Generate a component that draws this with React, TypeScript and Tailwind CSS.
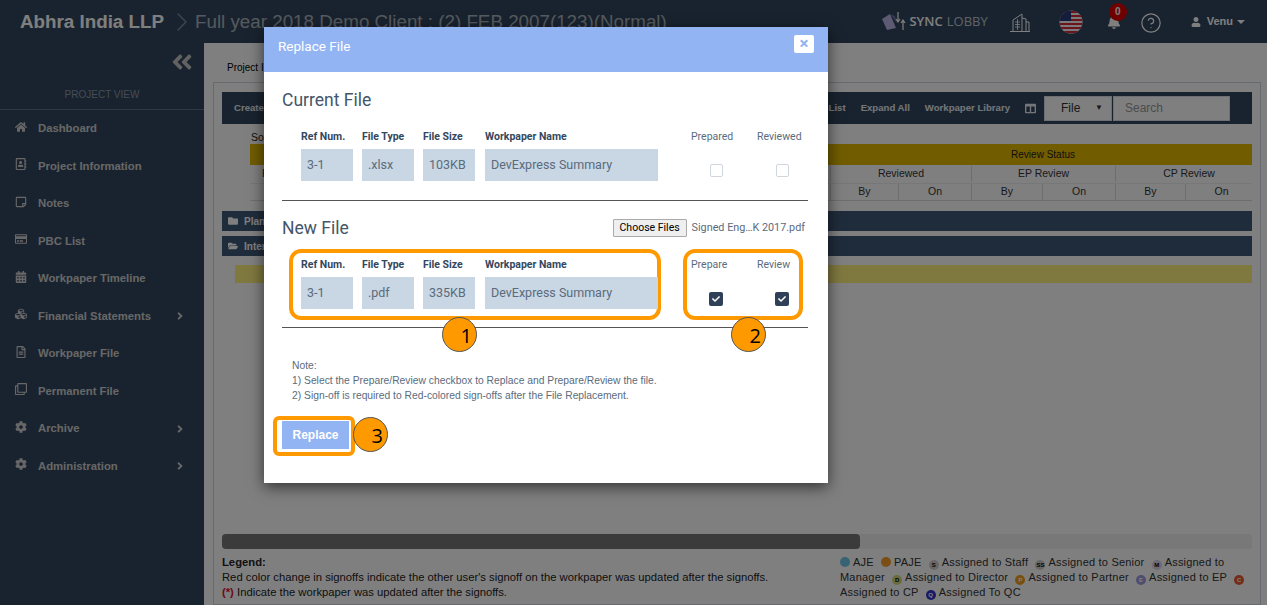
import { ReactNode } from "react";
import {
  FaAngleDoubleLeft, FaAngleRight, FaBell, FaCalendarAlt, FaCheck, FaCog, FaColumns, FaCubes, FaFolder,
  FaFolderOpen, FaHome, FaRegAddressBook, FaRegClone, FaRegCreditCard, FaRegFileAlt, FaRegStickyNote, FaUser,
} from "react-icons/fa";
import { ChevronRight, CircleHelp } from "lucide-react";

const navItems = [
  { label: "Dashboard", icon: <FaHome /> },
  { label: "Project Information", icon: <FaRegAddressBook /> },
  { label: "Notes", icon: <FaRegStickyNote /> },
  { label: "PBC List", icon: <FaRegCreditCard /> },
  { label: "Workpaper Timeline", icon: <FaCalendarAlt /> },
  { label: "Financial Statements", icon: <FaCubes />, more: true },
  { label: "Workpaper File", icon: <FaRegFileAlt /> },
  { label: "Permanent File", icon: <FaRegClone /> },
  { label: "Archive", icon: <FaCog />, more: true },
  { label: "Administration", icon: <FaCog />, more: true },
];

const legendItems = [
  { c: "bg-[#6ec6ea]", t: "", label: ["AJE"] },
  { c: "bg-[#f59d2a]", t: "", label: ["PAJE"] },
  { c: "bg-[#ccc] text-black", t: "S", label: ["Assigned to Staff"] },
  { c: "bg-[#ccc] text-black", t: "SS", label: ["Assigned to Senior"] },
  { c: "bg-[#d7d5ea] text-black", t: "M", label: ["Assigned to", "Manager"] },
  { c: "bg-[#d5d87a] text-black", t: "D", label: ["Assigned to Director"] },
  { c: "bg-[#f29f1d] text-white", t: "P", label: ["Assigned to Partner"] },
  { c: "bg-[#9e9ae0] text-white", t: "E", label: ["Assigned to EP"] },
  { c: "bg-[#ea5a34] text-white", t: "C", label: ["Assigned to CP"] },
  { c: "bg-[#3433c9] text-white", t: "Q", label: ["Assigned To QC"] },
];

function Flag() {
  return (
    <svg width="24" height="24" viewBox="0 0 24 24">
      <clipPath id="flag"><circle cx="12" cy="12" r="11.5" /></clipPath>
      <g clipPath="url(#flag)">
        <rect width="24" height="24" fill="#f4f4f4" />
        {[1, 5, 9, 13, 17, 21].map((y) => <rect key={y} y={y} width="24" height="2" fill="#d8283c" />)}
        <rect width="12" height="11" fill="#2a3a78" />
      </g>
    </svg>
  );
}

function Logo() {
  return (
    <svg width="24" height="22" viewBox="0 0 24 22">
      <path d="M0 8 L8 3 L14 17 L5 19 Z" fill="#b9b6e6" />
      <path d="M8 3 L13 5 L15 12 Z" fill="#6d6aa8" />
      <path d="M16 1 V10 M14 8 L16 11 L18 8" stroke="#fff" strokeWidth="1.2" fill="none" />
      <path d="M21 19 V10 M19 12 L21 9 L23 12" stroke="#fff" strokeWidth="1.2" fill="none" />
    </svg>
  );
}

function Building() {
  return (
    <svg width="22" height="22" viewBox="0 0 22 22" fill="none" stroke="#fff" strokeWidth="1">
      <path d="M4 20 V9 L13 3 V20 M13 7 L17 8 V20 M17 11 H20 V20 M1 20.5 H21" />
      <path d="M6 11 H11 M6 13.5 H11 M6 16 H11 M8.500 8 V19" strokeWidth="0.8" />
    </svg>
  );
}

function Header() {
  return (
    <div className="flex h-[43px] shrink-0 items-center bg-[#33475e] pl-5 pr-[22px] font-['Liberation_Sans',sans-serif]">
      <span className="mt-px text-[18.8px] font-bold text-white">Abhra India LLP</span>
      <ChevronRight size={32} strokeWidth={0.9} className="ml-[2px] mt-px text-white/40" />
      <span className="-ml-[3px] mt-px text-[18.8px] text-white/60">Full year 2018 Demo Client : (2) FEB 2007(123)(Normal)</span>
      <div className="ml-auto flex items-center">
        <Logo />
        <span className="ml-[3px] font-['Open_Sans',sans-serif] text-[13px] font-semibold text-white">SYNC</span>
        <span className="ml-1 font-['Open_Sans',sans-serif] text-[13px] text-white/70">LOBBY</span>
        <div className="ml-[21px]"><Building /></div>
        <div className="ml-[28px]"><Flag /></div>
        <div className="relative ml-[24px] text-[14px] text-white">
          <FaBell />
          <span className="absolute -top-[12px] -right-[6px] flex h-[18px] w-[18px] items-center justify-center rounded-full bg-[#e00000] text-[10px] font-bold">0</span>
        </div>
        <CircleHelp size={22} strokeWidth={1.3} className="ml-[19px] mt-[2px] text-white" />
        <FaUser className="ml-[29px] text-[10px] text-white" />
        <span className="ml-[6px] text-[11px] font-bold text-white">Venu</span>
        <span className="ml-[4px] h-0 w-0 border-x-[4px] border-t-[4px] border-x-transparent border-t-white" />
      </div>
    </div>
  );
}

function Sidebar() {
  return (
    <aside className="flex w-[204px] shrink-0 flex-col bg-[#33475e] font-['Liberation_Sans',sans-serif]">
      <div className="flex h-[38px] items-center justify-end pr-[10px] text-[24px] text-[#c4c4c4]"><FaAngleDoubleLeft /></div>
      <div className="h-[29px] border-b border-[#5c7088] text-center text-[10px] leading-[28px] text-[#8a98a8]">PROJECT VIEW</div>
      <nav className="flex flex-col">
        {navItems.map((item) => (
          <div key={item.label} className="flex h-[37.5px] items-center pl-[15px] pr-[18px] text-[#cfcfcf]">
            <span className="-mt-[4px] flex w-[23px] text-[12px]">{item.icon}</span>
            <span className="text-[11.3px] font-bold">{item.label}</span>
            {item.more && <FaAngleRight className="ml-auto text-[12px]" />}
          </div>
        ))}
      </nav>
    </aside>
  );
}

function Cell({ w, children }: { w: string; children: ReactNode }) {
  return <div className={`${w} border-l border-[#ddd] text-center`}>{children}</div>;
}

function ProjectPanel() {
  return (
    <main className="flex min-w-0 flex-1 flex-col bg-white font-['Liberation_Sans',sans-serif] text-[#222]">
      <div className="h-[39px] pl-[23px] pt-[18px] text-[10px] leading-[14px] text-black">Project Information</div>
      <div className="ml-[9px] mr-[6px] flex flex-1 flex-col border border-[#cfd6de] px-[8px] pt-[9px]">
        <div className="flex h-[32px] items-center bg-[#33475e] pl-3 pr-[22px] text-[9.6px] font-bold text-[#e8edf2]">
          <span>Create</span>
          <span className="ml-auto">List</span>
          <span className="ml-[15px]">Expand All</span>
          <span className="ml-[15px]">Workpaper Library</span>
          <FaColumns className="ml-[15px] text-[11px]" />
          <div className="ml-[8px] flex h-[25px] w-[68px] items-center justify-between border border-[#d8dfe6] bg-white pl-4 pr-2 text-[12px] font-normal text-[#333]">
            File <span className="text-[8px]">▼</span>
          </div>
          <div className="ml-px flex h-[25px] w-[117px] items-center border border-[#d8dfe6] bg-white pl-[11px] text-[12px] font-normal text-[#999]">Search</div>
        </div>
        <div className="h-[20px] pl-[29px] pt-[6px] text-[10.5px] leading-[14px]">Sort</div>
        <div className="ml-[28px] flex h-[21px] items-center justify-end bg-[#e3b800] text-[10px]">
          <span className="mr-[177px]">Review Status</span>
        </div>
        <div className="ml-[28px] flex flex-col border-b border-[#ddd] text-[10.5px] text-[#333]">
          <div className="flex h-[19px] items-center border-b border-[#eee] pl-3">
            <span>F</span>
            <div className="ml-auto flex">
              <Cell w="w-[141px]">Reviewed</Cell>
              <Cell w="w-[144px]">EP Review</Cell>
              <Cell w="w-[137px] pl-[10px]">CP Review</Cell>
            </div>
          </div>
          <div className="flex h-[16px] items-center justify-end">
            <Cell w="w-[68px]">By</Cell>
            <Cell w="w-[73px]">On</Cell>
            <Cell w="w-[71px]">By</Cell>
            <Cell w="w-[73px]">On</Cell>
            <Cell w="w-[70px]">By</Cell>
            <Cell w="w-[67px] pl-[5px]">On</Cell>
          </div>
        </div>
        <div className="mt-[10px] flex h-[20px] items-center gap-[6px] bg-[#3f5877] pl-[6px] text-[10px] font-bold text-white">
          <FaFolder /> Planning
        </div>
        <div className="mt-[5px] flex h-[20px] items-center gap-[6px] bg-[#3f5877] pl-[6px] text-[10px] font-bold text-white">
          <FaFolderOpen /> Interim
        </div>
        <div className="ml-[13px] mt-[9px] h-[18px] bg-[#fff07f]" />
        <div className="mt-[251px] h-[15px] rounded-[3px] bg-[#f0f0f0]">
          <div className="h-full w-[638px] rounded-[4px] bg-[#777]" />
        </div>
        <div className="mt-[6px] flex justify-between leading-[15px] text-[#222]">
          <div className="whitespace-nowrap text-[11.25px]">
            <p className="font-bold">Legend:</p>
            <p>Red color change in signoffs indicate the other user's signoff on the workpaper was updated after the signoffs.</p>
            <p><span className="font-bold text-[#e0142c]">(*)</span> <span>Indicate the workpaper was updated after the signoffs.</span></p>
          </div>
          <Legend />
        </div>
      </div>
    </main>
  );
}

function Legend() {
  return (
    <div className="w-[412px] shrink-0 text-[11px] text-[#333] tracking-[0.2px]">
      {legendItems.map((item) => (
        <span key={item.label[0] + item.t} className="ml-[4px] first:ml-0">
          <span className={`mr-[3px] inline-flex h-[10px] w-[10px] items-center justify-center rounded-full align-[-1px] text-[6px] font-bold leading-[10px] tracking-normal ${item.c}`}>{item.t}</span>
          {item.label.map((part) => <span key={part}>{part} </span>)}
          {" "}
        </span>
      ))}
    </div>
  );
}

function Field({ w, value }: { w: string; value: string }) {
  return <div className={`${w} flex h-[32px] items-center bg-[#c9d6e3] pl-[6px] text-[12.5px] text-[#5a6b7d]`}>{value}</div>;
}

function FieldCol({ w, label, value }: { w: string; label: string; value: string }) {
  return (
    <div className="flex flex-col">
      <div className="mb-[4px] h-[16px] text-[10.5px] font-bold leading-[16px] text-[#33475e]">{label}</div>
      <Field w={w} value={value} />
    </div>
  );
}

function CheckCol({ label, checked, w }: { label: string; checked?: boolean; w: string }) {
  return (
    <div className={`flex ${w} shrink-0 flex-col`}>
      <div className="h-[16px] whitespace-nowrap text-[10.5px] leading-[16px] text-[#5a6b7d]">{label}</div>
      <div className="mt-[19px] flex w-[50px] justify-center">
        {checked ? (
          <span className="flex h-[14px] w-[14px] items-center justify-center rounded-[2px] bg-[#2f4058] text-[8px] text-white"><FaCheck /></span>
        ) : (
          <span className="h-[13px] w-[13px] rounded-[2px] border border-[#cfd6de] bg-white" />
        )}
      </div>
    </div>
  );
}

function FileRow({ type, size, labels, checked, highlight }: { type: string; size: string; labels: [string, string]; checked?: boolean; highlight?: boolean }) {
  const frame = highlight ? "border-[#ff9900]" : "border-transparent";
  return (
    <div className="flex justify-between pl-[7px] pr-[5px]">
      <div className={`flex h-[71px] w-[372px] gap-[9px] rounded-[12px] border-[4px] ${frame} pl-[8px] pt-[4px]`}>
        <FieldCol w="w-[52px]" label="Ref Num." value="3-1" />
        <FieldCol w="w-[52px]" label="File Type" value={type} />
        <FieldCol w="w-[52px]" label="File Size" value={size} />
        <div className="ml-px"><FieldCol w="w-[173px]" label="Workpaper Name" value="DevExpress Summary" /></div>
      </div>
      <div className={`flex h-[71px] w-[120px] rounded-[12px] border-[4px] ${frame} pl-[4px] pt-[4px]`}>
        <CheckCol w="w-[66px]" label={labels[0]} checked={checked} />
        <CheckCol w="w-[43px]" label={labels[1]} checked={checked} />
      </div>
    </div>
  );
}

function Step({ n, className }: { n: number; className: string }) {
  return (
    <span className={`absolute flex h-[35px] w-[35px] items-center justify-end rounded-full border border-[#555] bg-[#ff9900] pr-[4px] pt-[3px] font-['Open_Sans',sans-serif] text-[20px] text-black ${className}`}>{n}</span>
  );
}

function ReplaceModal() {
  return (
    <div className="absolute left-[264px] top-[27px] w-[564px] bg-white font-['Roboto',sans-serif] shadow-[0_4px_14px_rgba(0,0,0,0.6)]">
      <div className="flex h-[45px] items-center justify-between bg-[#93b4f3] pb-[7px] pl-[14px] pr-[14px]">
        <span className="text-[13.5px] text-white">Replace File</span>
        <span className="-mt-[5px] flex h-[18px] w-[20px] items-center justify-center rounded-[2px] bg-white text-[17px] font-bold leading-none text-[#93b4f3]">×</span>
      </div>
      <div className="relative pb-[27px] pl-[18px] pr-[20px] pt-[16px]">
        <h2 className="mb-[9px] h-[24px] text-[17.5px] leading-[24px] text-[#44566a]">Current File</h2>
        <FileRow type=".xlsx" size="103KB" labels={["Prepared", "Reviewed"]} />
        <hr className="mt-[8px] border-t-[1.5px] border-[#555]" />
        <div className="mb-[9px] mt-[15px] flex h-[24px] items-center justify-between">
          <h2 className="text-[17.5px] leading-[24px] text-[#44566a]">New File</h2>
          <div className="flex items-center gap-[5px] pr-[3px] text-[10.8px] text-[#5a6b7d]">
            <button className="h-[18px] w-[74px] rounded-[1px] border border-[#aaa] bg-[#efefef] text-[10.5px] text-black">Choose Files</button>
            <span>Signed Eng…K 2017.pdf</span>
          </div>
        </div>
        <FileRow type=".pdf" size="335KB" labels={["Prepare", "Review"]} checked highlight />
        <hr className="mt-[7px] border-t-[1.5px] border-[#555]" />
        <Step n={1} className="left-[178px] top-[245px]" />
        <Step n={2} className="left-[467px] top-[245px]" />
        <div className="mt-[30px] pl-[10px] font-['Liberation_Sans',sans-serif] text-[10.3px] leading-[15px] text-[#5a6b7d]">
          <p>Note:</p>
          <p>1) Select the Prepare/Review checkbox to Replace and Prepare/Review the file.</p>
          <p>2) Sign-off is required to Red-colored sign-offs after the File Replacement.</p>
        </div>
        <div className="relative -ml-[9px] mt-[13px] w-[82px] rounded-[6px] border-[4px] border-[#ff9900] px-[5px] pb-[3px] pt-[1px]">
          <button className="h-[28px] w-[67px] bg-[#93b4f3] font-['Liberation_Sans',sans-serif] text-[12px] font-bold text-white">Replace</button>
          <Step n={3} className="-right-[37px] -top-[3px]" />
        </div>
      </div>
    </div>
  );
}

export default function App() {
  return (
    <div className="relative flex h-[605px] w-[1267px] flex-col overflow-hidden">
      <Header />
      <div className="flex min-h-0 flex-1">
        <Sidebar />
        <ProjectPanel />
      </div>
      <div className="absolute inset-0 bg-black/50" />
      <ReplaceModal />
    </div>
  );
}
